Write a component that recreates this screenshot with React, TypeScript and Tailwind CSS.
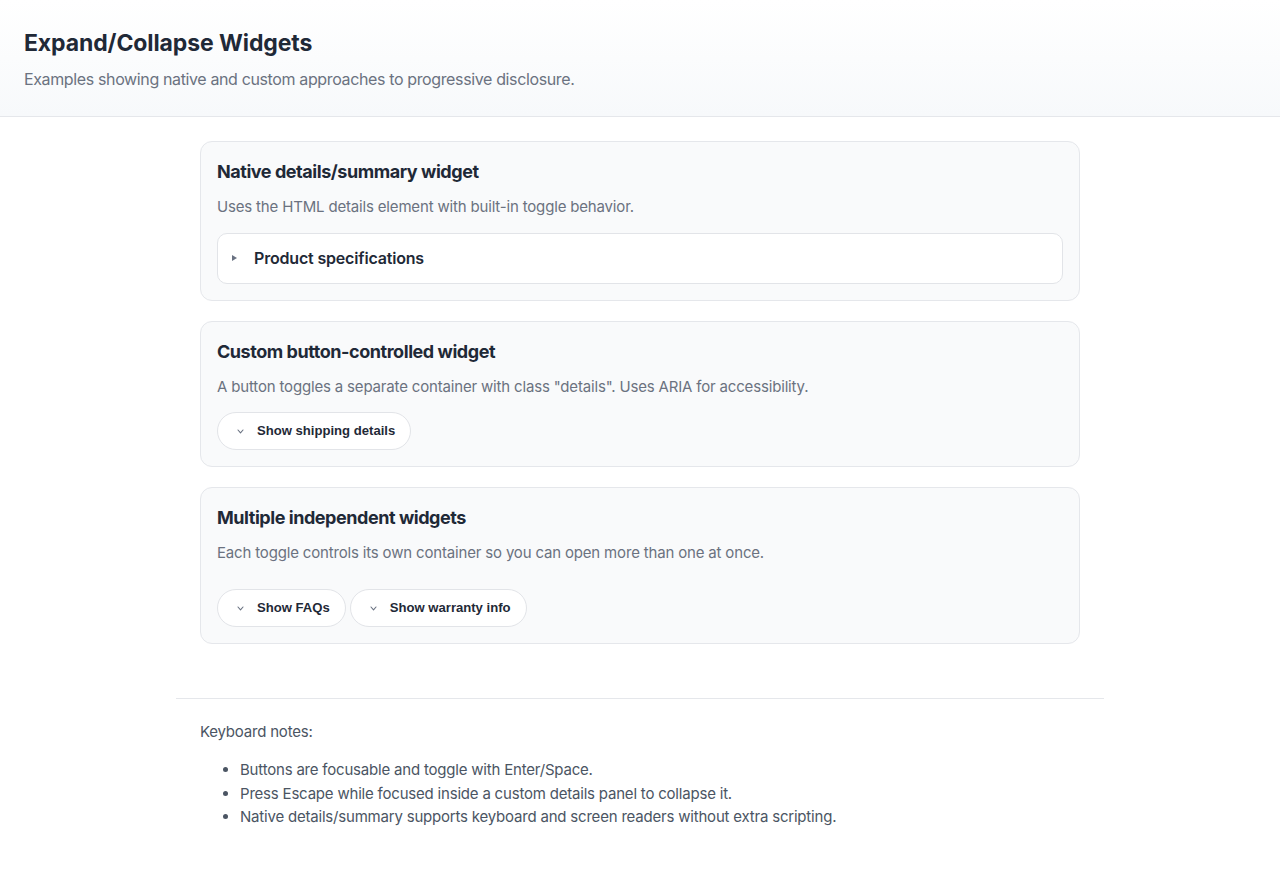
import React, { useState } from 'react';

const sans = "font-['Inter','Noto_Sans',sans-serif]";

function Chevron() {
  return (
    <svg width="7" height="5" viewBox="0 0 7 5" className="shrink-0 text-gray-500" aria-hidden="true">
      <polyline points="1,1 3.5,3.8 6,1" fill="none" stroke="currentColor" strokeWidth="1.1" strokeLinecap="round" strokeLinejoin="round" />
    </svg>
  );
}

function ToggleButton({ label, open, onClick }: { label: string; open: boolean; onClick: () => void }) {
  return (
    <button
      type="button"
      aria-expanded={open}
      onClick={onClick}
      className="h-[38px] pl-[19px] pr-[15px] flex items-center gap-[13px] rounded-full border border-[#e2e4e8] bg-white text-[13.1px] font-bold text-[#1f2937] font-['Liberation_Sans',Arial,sans-serif]"
    >
      <Chevron />
      <span>{label}</span>
    </button>
  );
}

function Card({ title, desc, children, gap }: { title: string; desc: string; children: React.ReactNode; gap: string }) {
  return (
    <section className="rounded-xl border border-[#e5e7eb] bg-[#f9fafb] px-4 pt-4 pb-4">
      <h2 className="text-[18px] leading-[28px] font-bold tracking-[-0.45px] text-[#1f2937]">{title}</h2>
      <p className="mt-[10px] text-[15px] leading-[22px] tracking-[-0.17px] text-[#6b7280]">{desc}</p>
      <div className={gap}>{children}</div>
    </section>
  );
}

export default function App() {
  const [shipping, setShipping] = useState(false);
  const [faqs, setFaqs] = useState(false);
  const [warranty, setWarranty] = useState(false);

  return (
    <div className={`min-h-screen bg-white ${sans}`}>
      <header className="px-6 pt-[29px] pb-[25px] border-b border-[#e5e7eb] bg-gradient-to-b from-white to-[#f7f9fb]">
        <h1 className="text-[23px] leading-[28px] font-bold tracking-[-0.1px] text-[#1f2937]">Expand/Collapse Widgets</h1>
        <p className="mt-[10px] text-[16px] leading-[24px] tracking-[-0.37px] text-[#6b7280]">
          Examples showing native and custom approaches to progressive disclosure.
        </p>
      </header>

      <main className="max-w-[928px] mx-auto">
        <div className="px-6 pt-6 flex flex-col gap-5">
          <Card
            title="Native details/summary widget"
            desc="Uses the HTML details element with built-in toggle behavior."
            gap="mt-[15px]"
          >
            <details className="rounded-[10px] border border-[#e2e4e8] bg-white">
              <summary className="list-none [&::-webkit-details-marker]:hidden flex items-center gap-[17px] pl-[14px] pr-4 pt-[12px] pb-[13px] cursor-pointer">
                <svg width="5" height="6" viewBox="0 0 5 6" className="text-gray-500" aria-hidden="true">
                  <polygon points="0,0 5,3 0,6" fill="currentColor" />
                </svg>
                <span className="text-[16px] leading-[24px] font-semibold tracking-[-0.18px] text-[#1f2937]">Product specifications</span>
              </summary>
            </details>
          </Card>

          <Card
            title="Custom button-controlled widget"
            desc={'A button toggles a separate container with class "details". Uses ARIA for accessibility.'}
            gap="mt-[14px] flex"
          >
            <ToggleButton label="Show shipping details" open={shipping} onClick={() => setShipping(!shipping)} />
          </Card>

          <Card
            title="Multiple independent widgets"
            desc="Each toggle controls its own container so you can open more than one at once."
            gap="mt-[25px] flex gap-[4px]"
          >
            <ToggleButton label="Show FAQs" open={faqs} onClick={() => setFaqs(!faqs)} />
            <ToggleButton label="Show warranty info" open={warranty} onClick={() => setWarranty(!warranty)} />
          </Card>
        </div>

        <footer className="mt-[54px] border-t border-[#e5e7eb] px-6 pt-[22px] pb-10 text-[15px] tracking-[-0.2px] text-[#4b5563]">
          <p className="leading-[22px]">Keyboard notes:</p>
          <ul className="mt-[15px] list-disc pl-10 leading-[23.5px]">
            <li>Buttons are focusable and toggle with Enter/Space.</li>
            <li>Press Escape while focused inside a custom details panel to collapse it.</li>
            <li>Native details/summary supports keyboard and screen readers without extra scripting.</li>
          </ul>
        </footer>
      </main>
    </div>
  );
}
